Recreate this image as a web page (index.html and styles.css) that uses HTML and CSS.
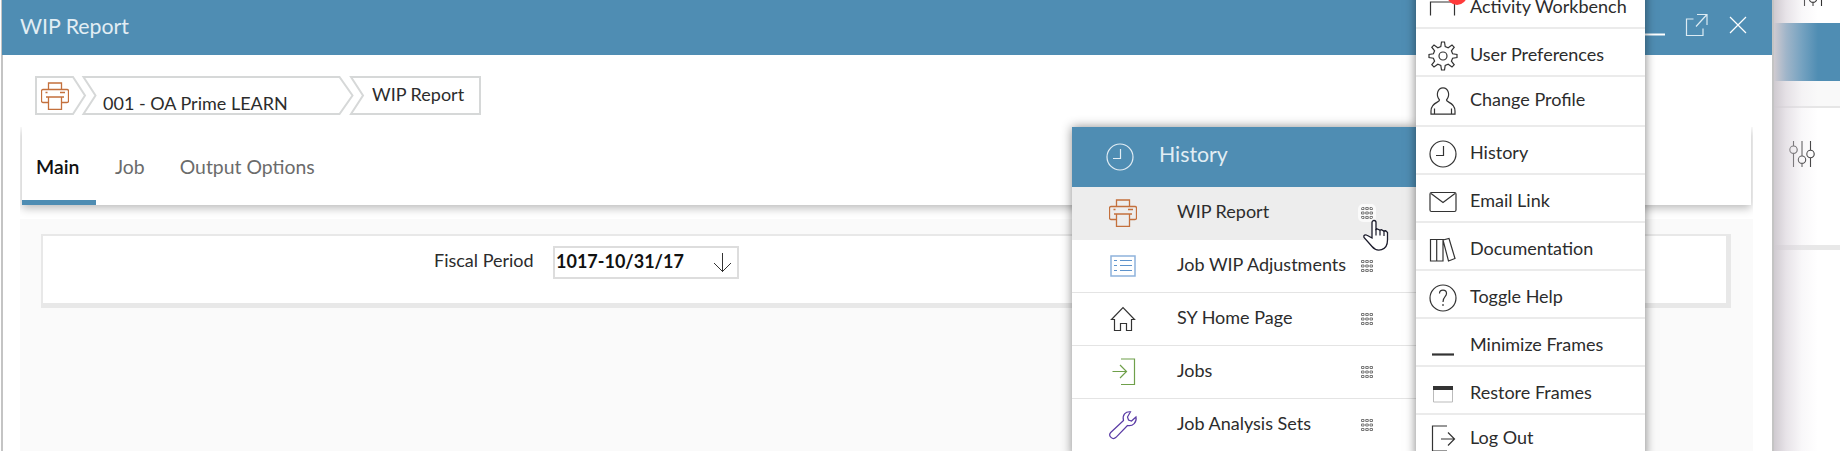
FILE: index.html
```
<!DOCTYPE html>
<html lang="en">
<head>
<meta charset="utf-8">
<title>WIP Report</title>
<link rel="stylesheet" href="styles.css">
</head>
<body>
<svg class="defs" width="0" height="0">
  <symbol id="printer" viewBox="0 0 28 28">
    <g fill="none" stroke="#c4703c" stroke-width="1.3">
      <path d="M7.500 7.500V1h13v6.500M7 20.500H2a1.500 1.500 0 0 1-1.500-1.500V9A1.500 1.500 0 0 1 2 7.500h24A1.500 1.500 0 0 1 27.500 9v10a1.500 1.500 0 0 1-1.500 1.500h-5M7.500 15v13M20.500 15v13M4.500 10.500h2M19 10.500h5M5 15h18M7.500 27.500h13"/>
    </g>
  </symbol>
  <symbol id="clock" viewBox="0 0 28 28">
    <g fill="none" stroke="currentColor" stroke-width="1.2"><circle cx="14" cy="14" r="13"/><path d="M14.500 6v9.500H7"/></g>
  </symbol>
  <symbol id="grid" viewBox="0 0 12 12">
    <g fill="none" stroke="#777" stroke-width="1">
      <path d="M.5.500h2.500v2H.5zM4.750.500h2.500v2h-2.500zM9 .500h2.500v2H9zM.5 5h2.500v2H.5zM4.750 5h2.500v2h-2.500zM9 5h2.500v2H9zM.5 9.500h2.500v2H.5zM4.750 9.500h2.500v2h-2.500zM9 9.500h2.500v2H9z"/>
    </g>
  </symbol>
  <symbol id="sliders" viewBox="0 0 26 28">
    <g fill="none" stroke="#333" stroke-width="1.100">
      <path d="M4.500 1v5M4.500 13.500V27M21.500 1v9M21.500 18v9"/>
      <path stroke="#888" stroke-width="1.800" d="M13 1v15M13 24v3"/>
      <circle cx="4.500" cy="9.700" r="3.700"/><circle cx="13" cy="19.700" r="3.700"/><circle cx="21.500" cy="14" r="3.700"/>
    </g>
  </symbol>
</svg>

<div class="screen">
  <main class="window">
    <header class="titlebar">
      <h1 class="title">WIP Report</h1>
      <div class="controls">
        <svg width="24" height="24"><path d="M0 21.500h24" stroke="#fff" stroke-width="2"/></svg>
        <svg class="popout" width="24" height="24" fill="none" stroke="#dcebf3" stroke-width="1.200"><path d="M8.500 6H1.500v16.500H18V15.500M11 13.500 21.500 2M12 1.500h10V12"/></svg>
        <svg class="close" width="18" height="18" stroke="#fff" stroke-width="1.200"><path d="M1 1l16 16M17 1 1 17"/></svg>
      </div>
    </header>
    <nav class="crumbs">
      <svg class="crumb-lines" width="449" height="40" fill="none" stroke="#d6d8d8" stroke-width="2"><path d="M2 1h37l12 18.500L39 38H2zM49.500 1h256l13 18.500L305.500 38h-256l12-18.500zM317 1h129v37H317l12-18.500z"/></svg>
      <svg class="crumb-icon" width="28" height="28"><use href="#printer"/></svg>
      <span class="crumb-org">001 - OA Prime LEARN</span>
      <span class="crumb-page">WIP Report</span>
    </nav>
    <div class="tabwrap">
      <div class="tabs">
        <span class="tab active">Main</span>
        <span class="tab job">Job</span>
        <span class="tab output">Output Options</span>
      </div>
    </div>
    <section class="content">
      <div class="panel">
        <label class="label">Fiscal Period</label>
        <div class="field"><span class="value">1017-10/31/17</span>
          <svg width="18" height="20" fill="none" stroke="#333" stroke-width="1"><path d="M9.500 0v19M1 10l8.500 8.500L18 10"/></svg>
        </div>
      </div>
    </section>
  </main>

  <aside class="behind">
    <svg class="sl-top" width="26" height="28"><use href="#sliders"/></svg>
    <div class="b-bar"></div>
    <div class="b-strip"></div>
    <div class="b-card"><svg class="sl" width="26" height="28"><use href="#sliders"/></svg></div>
  </aside>

  <div class="history">
    <div class="h-head"><svg width="28" height="28"><use href="#clock"/></svg><span>History</span></div>
    <div class="h-row on"><svg width="28" height="28"><use href="#printer"/></svg><span class="ht">WIP Report</span><svg class="grip" width="12" height="12"><use href="#grid"/></svg></div>
    <div class="h-row"><svg width="28" height="28" fill="none" stroke="#5d93cc" stroke-width="1.200"><path stroke="#8fb3dc" stroke-width="1.500" d="M2 4h24v20H2z"/><path d="M5 8.500h3M11 8.500h12M5 13.500h3M11 13.500h12M5 18.500h3M11 18.500h12"/></svg><span class="ht">Job WIP Adjustments</span><svg class="grip" width="12" height="12"><use href="#grid"/></svg></div>
    <div class="h-row"><svg width="28" height="28" fill="none" stroke="#333" stroke-width="1.200"><path d="M5.500 14.500H2.500L14 2.500l11.500 12h-3v11h-5v-7h-6v7h-6z"/></svg><span class="ht">SY Home Page</span><svg class="grip" width="12" height="12"><use href="#grid"/></svg></div>
    <div class="h-row"><svg width="28" height="28" fill="none" stroke="#6fa04a" stroke-width="1.200"><path d="M12 1h13.500v25.500H12M3.500 13.500h14M11 7l6.500 6.500L11 20"/></svg><span class="ht">Jobs</span><svg class="grip" width="12" height="12"><use href="#grid"/></svg></div>
    <div class="h-row"><svg width="28" height="28" fill="none" stroke="#5a3ba5" stroke-width="1.200"><path d="M21.500.800c-5-.5-8.500 3.200-7 8.700L1.700 21.500c-3 3.500 2 8 5.300 4.800L18.500 14.500c5.500 1.200 9.500-3.500 8.500-8.500l-4.500 4-3-1-1-3z"/></svg><span class="ht">Job Analysis Sets</span><svg class="grip" width="12" height="12"><use href="#grid"/></svg></div>
  </div>

  <div class="menu">
    <div class="m-row desk"><svg width="28" height="28" fill="none" stroke="#333" stroke-width="1.200"><path d="M1.500 22.500V9h24v13.500"/><circle cx="28" cy="2" r="10" fill="#ff3b3b" stroke="none"/></svg><span>Activity Workbench</span></div>
    <div class="m-row prefs"><svg width="30" height="30" viewBox="0 0 30 30" fill="none" stroke="#333" stroke-width="1.200"><circle cx="15" cy="15" r="4"/><path d="M13.500 1h3l.7 4.500 3 1.200L24 4l2.200 2.200-2.800 3.600 1.200 3 4.400.7v3l-4.400.7-1.200 3 2.800 3.600L24 26l-3.800-2.700-3 1.200-.7 4.500h-3l-.7-4.500-3-1.200L6 26l-2.200-2.200 2.800-3.600-1.200-3L1 16.500v-3l4.400-.7 1.200-3L3.800 6.200 6 4l3.800 2.700 3-1.200z"/></svg><span>User Preferences</span></div>
    <div class="m-row profile"><svg width="28" height="28" fill="none" stroke="#333" stroke-width="1.200"><path d="M10.500 13C6.500 8.500 8.500.800 14 .800S21.500 8.500 17.500 13c-.5 2.500 8.500 2 8.500 11v3.200H2V24c0-9 9-8.500 8.500-11zM5.500 27v-5.500M22.500 27v-5.500"/></svg><span>Change Profile</span></div>
    <div class="m-row"><svg width="28" height="28"><use href="#clock"/></svg><span>History</span></div>
    <div class="m-row"><svg width="28" height="28" fill="none" stroke="#333" stroke-width="1.200"><rect x="1" y="4.500" width="26" height="19" rx="1.500"/><path d="m2 5.500 12 9 12-9"/></svg><span>Email Link</span></div>
    <div class="m-row"><svg width="28" height="28" fill="none" stroke="#333" stroke-width="1.200"><path d="M1.500 3.500H14V25H1.500zM7.700 3.500V25M14 4l6-1.500L26 22.500 19.500 25z"/></svg><span>Documentation</span></div>
    <div class="m-row"><svg width="28" height="28" fill="none" stroke="#333" stroke-width="1.200"><circle cx="14" cy="14" r="13"/><path d="M10.500 9.500C10.500 5 17.500 5 17.500 9.500c0 3.500-3.500 3-3.500 8.500M14 20v2"/></svg><span>Toggle Help</span></div>
    <div class="m-row"><svg width="28" height="28"><path d="M3 22.500h22" stroke="#333" stroke-width="2.200"/></svg><span>Minimize Frames</span></div>
    <div class="m-row"><svg width="28" height="28"><path d="M4.500 6v16h19V6" fill="none" stroke="#bbb"/><path d="M4 6h20v4H4z" fill="#333"/></svg><span>Restore Frames</span></div>
    <div class="m-row logout"><svg width="28" height="28" fill="none" stroke="#333" stroke-width="1.200"><path d="M18 1H3.500v25H18M12 14h14M19 7.500l6.500 6.500-6.500 6.500"/></svg><span>Log Out</span></div>
  </div>

  <svg class="cursor" width="28" height="34" viewBox="0 0 28 34"><path d="M10 19V3.500a2 2 0 0 1 4 0V10.500l1.200-.6 2.600 1.200 1.700-.4 2.200 1.300 2-.2L25.500 13.500V21c0 11-10.500 12.500-15.500 6.500L2 18.500c-1-2.300 1.500-3.200 3-2.300l5 2.800z" fill="#fff" stroke="#1b1b2b" stroke-width="1.300"/><path d="M14 10v6.500M18 11v5.500M22 12v5" stroke="#1b1b2b" stroke-width="1.200"/></svg>
</div>
</body>
</html>
```
FILE: styles.css
```
* { box-sizing: border-box; }
body { margin: 0; font-family: Lato, "Liberation Sans", sans-serif; font-size: 18px; color: #2c2c2c; }
svg { display: block; flex: none; overflow: visible; }
.defs { position: absolute; }
.screen { position: relative; display: flex; width: 1840px; height: 451px; overflow: hidden; background: #fff; }
span, h1, label { white-space: nowrap; }

.window { width: 1774px; height: 451px; padding-left: 2px; border-right: 2px solid #c4c4c4; background: linear-gradient(90deg, #fff 1px, #c4c4c4 1px, #c4c4c4 3px, #fff 3px); flex: none; }
.titlebar { display: flex; justify-content: space-between; height: 55px; background: #4f8db3; color: #e2edf4; }
.title { margin: 0; padding-left: 18px; font-size: 21.3px; font-weight: 400; line-height: 52px; }
.controls { display: flex; padding: 13px 25px 0 0; }
.popout { margin: 0 20px 0 20px; }
.close { margin-top: 3px; }

.crumbs { position: relative; display: flex; height: 39px; margin: 21px 0 0 33px; }
.crumb-lines { position: absolute; left: -1px; top: 0; }
.crumb-icon { margin: 6px 0 0 6px; }
.crumb-org { width: 269px; margin-left: 34px; line-height: 54px; }
.crumb-page { line-height: 37px; }

.tabwrap { width: 1733px; height: 92px; margin: 12px 0 0 18px; padding: 0 2px; overflow: hidden; }
.tabs { display: flex; height: 78px; box-shadow: 0 3px 9px rgba(0,0,0,.28); font-size: 19.4px; line-height: 79px; color: #6b6b6b; background: #fff; }
.tab { padding: 0 15px; }
.tab.active { width: 74px; padding-left: 14px; color: #111; font-weight: 600; border-bottom: 5px solid #4f8db3; }
.job { padding-left: 19px; }
.output { padding-left: 20px; }
.content { width: 1733px; height: 232px; margin-left: 18px; padding: 15px 22px 0 21px; background: #fafafa; }
.panel { display: flex; height: 74px; padding: 10px 0 0 391px; background: #fff; border: 2px solid #e8e8e8; border-right-width: 5px; border-bottom-width: 5px; }
.label { width: 119px; line-height: 28px; }
.field { display: flex; justify-content: space-between; width: 186px; height: 33px; padding: 5px 6px 0 1px; border: 2px solid #ddd; }
.value { font-weight: 700; line-height: 16px; color: #111; }

.behind { width: 66px; height: 451px; position: relative; overflow: hidden; }
.behind::after { content: ""; position: absolute; inset: 0; background: linear-gradient(90deg, #cfcad0 0, rgba(215,208,216,.6) 12px, rgba(230,225,232,.25) 28px, rgba(255,255,255,0) 44px); }
.sl-top { margin: -21px 0 0 26px; }
.b-bar { height: 58px; margin-top: 16px; background: #4f8db3; }
.b-strip { height: 27px; background: #f9f9f9; border-bottom: 2px solid #e6e6e6; }
.b-card { height: 142px; padding: 32px 0 0 15px; border-bottom: 5px solid #e8e8e8; }

.history { position: absolute; left: 1072px; top: 127px; width: 344px; height: 330px; background: #fff; box-shadow: 0 0 10px rgba(0,0,0,.45); }
.h-head { display: flex; height: 60px; padding: 16px 0 0 34px; gap: 25px; background: #4f8db3; color: #e2edf4; font-size: 21.3px; line-height: 22px; }
.h-row { display: flex; align-items: center; height: 53px; padding: 0 43px 0 37px; border-bottom: 1px solid #e4e4e4; }
.h-row.on { background: #ededed; border-color: #ededed; }
.ht { flex: 1; margin: 0 0 5px 40px; }
.on .grip { outline: 3px solid #fafafa; background: #fafafa; border-radius: 2px; }

.menu { position: absolute; left: 1416px; top: -21px; width: 229px; height: 480px; background: #fff; box-shadow: 0 0 10px rgba(0,0,0,.5); }
.m-row { display: flex; align-items: center; height: 48px; padding: 7px 0 0 13px; border-bottom: 2px solid #ebebeb; }
.m-row span { margin: 0 0 3px 13px; }
.m-row svg { color: #333; }
.m-row.desk { height: 50px; }
.desk span { margin-bottom: 1px; }
.prefs svg { margin: 0 -1px; }
.m-row.profile { height: 50px; padding-top: 0; }
.profile span { margin-bottom: 5px; }
.m-row.logout { padding-top: 2px; }
.logout span { margin-bottom: 5px; }
.cursor { position: absolute; left: 1362px; top: 219px; }
```
